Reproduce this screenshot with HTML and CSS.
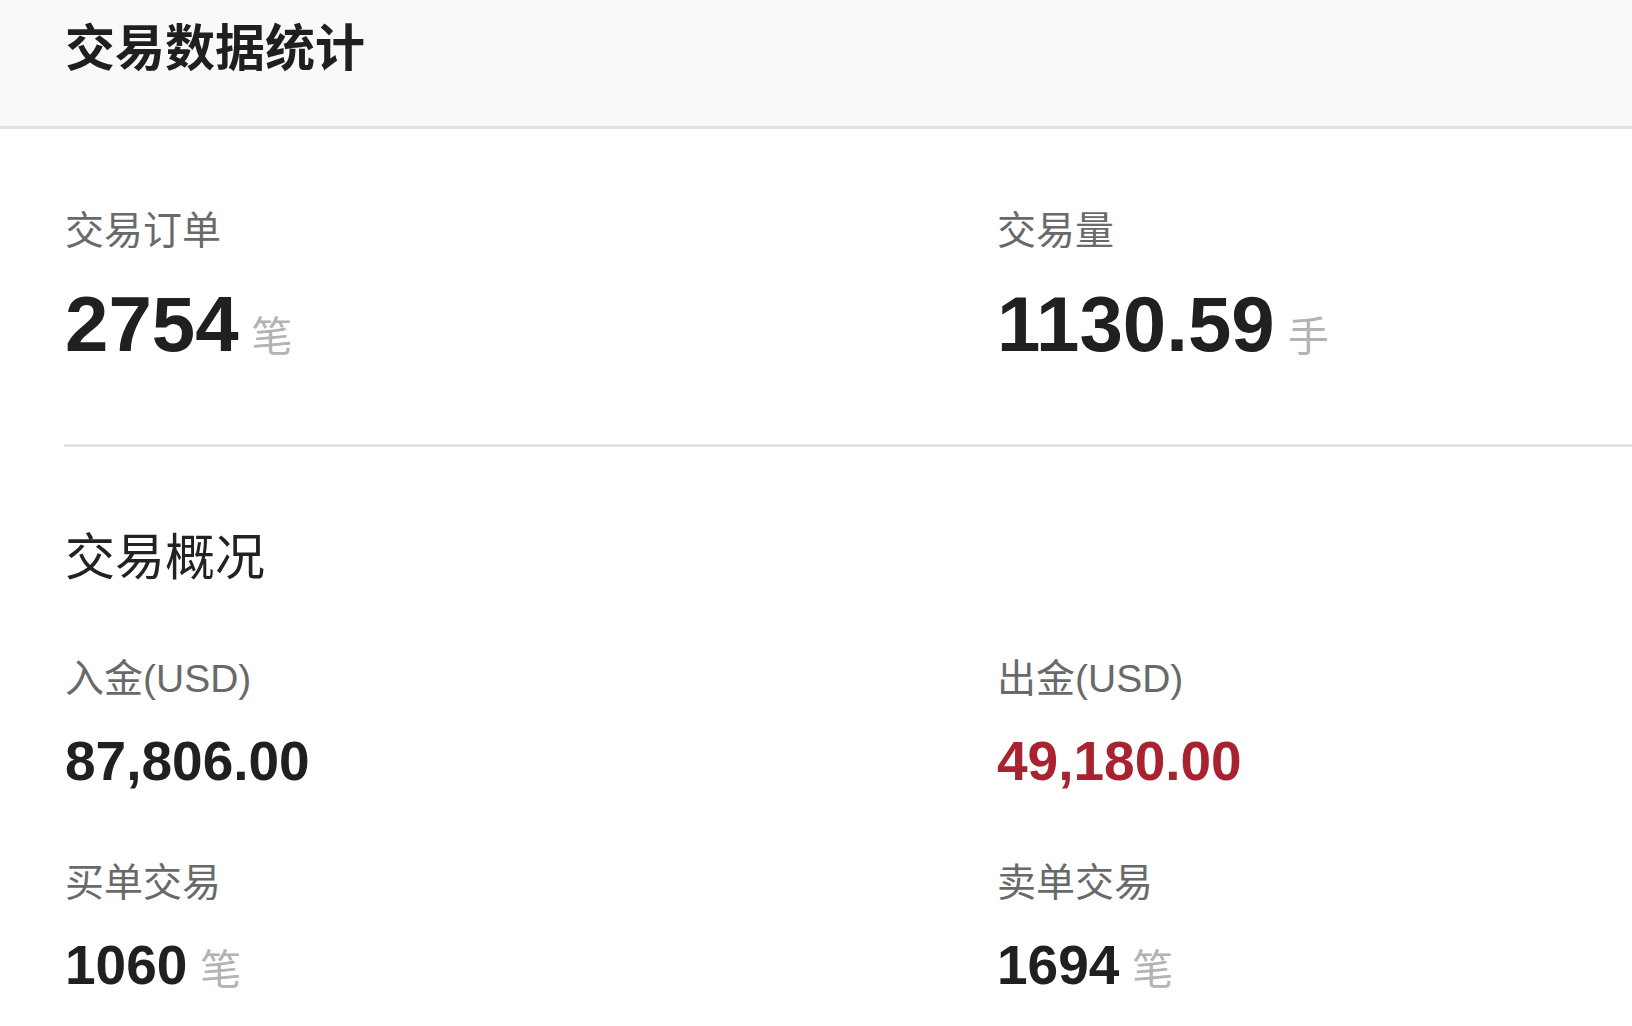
FILE: index.html
```html
<!DOCTYPE html>
<html lang="zh-CN">
<head>
<meta charset="utf-8">
<title>交易数据统计</title>
<link rel="stylesheet" href="styles.css">
</head>
<body>
<header class="page-header">
  <h1 class="page-title">交易数据统计</h1>
</header>
<main class="content">
  <section class="stats-grid">
    <div class="stat">
      <div class="stat-label">交易订单</div>
      <div class="stat-value stat-value--large">2754<span class="unit">笔</span></div>
    </div>
    <div class="stat">
      <div class="stat-label">交易量</div>
      <div class="stat-value stat-value--large">1130.59<span class="unit">手</span></div>
    </div>
  </section>
  <hr class="divider">
  <section class="overview">
    <h2 class="section-title">交易概况</h2>
    <div class="overview-grid">
      <div class="stat">
        <div class="stat-label">入金(USD)</div>
        <div class="stat-value">87,806.00</div>
      </div>
      <div class="stat">
        <div class="stat-label">出金(USD)</div>
        <div class="stat-value stat-value--negative">49,180.00</div>
      </div>
      <div class="stat">
        <div class="stat-label">买单交易</div>
        <div class="stat-value">1060<span class="unit">笔</span></div>
      </div>
      <div class="stat">
        <div class="stat-label">卖单交易</div>
        <div class="stat-value">1694<span class="unit">笔</span></div>
      </div>
    </div>
  </section>
</main>
</body>
</html>
```

FILE: styles.css
```css
html, body {
  margin: 0;
  padding: 0;
  background: #ffffff;
}

body {
  font-family: "Liberation Sans", Arial, "Noto Sans CJK SC", sans-serif;
  color: #222222;
  overflow: hidden;
}

.page-header {
  box-sizing: border-box;
  height: 129px;
  padding: 24px 0 0 65px;
  background: #f8f9fb;
  border-bottom: 3px solid #dfe1e7;
}

.page-title {
  margin: 0;
  font-size: 50px;
  line-height: 50px;
  font-weight: 700;
  color: #1f1f1f;
}

.content {
  padding-left: 65px;
}

.stats-grid {
  display: grid;
  grid-template-columns: 932px 1fr;
  padding-top: 82px;
}

.stat-label {
  font-size: 39px;
  line-height: 40px;
  color: #696969;
  white-space: nowrap;
}

.stat-value {
  margin-top: 35px;
  font-size: 55px;
  line-height: 1;
  font-weight: 700;
  color: #202020;
  white-space: nowrap;
}

.stat-value--large {
  margin-top: 34px;
  font-size: 78px;
}

.stat-value--negative {
  color: #a8232f;
}

.unit {
  margin-left: 13px;
  font-size: 41px;
  font-weight: 400;
  color: #b3b3b3;
}

.divider {
  margin: 81px 0 0 -1px;
  height: 3px;
  border: 0;
  background: #e0e2e8;
}

.section-title {
  margin: 86px 0 0 0;
  font-size: 50px;
  line-height: 50px;
  font-weight: 400;
  color: #222222;
}

.overview-grid {
  display: grid;
  grid-template-columns: 932px 1fr;
  row-gap: 74px;
  margin-top: 76px;
}
```
